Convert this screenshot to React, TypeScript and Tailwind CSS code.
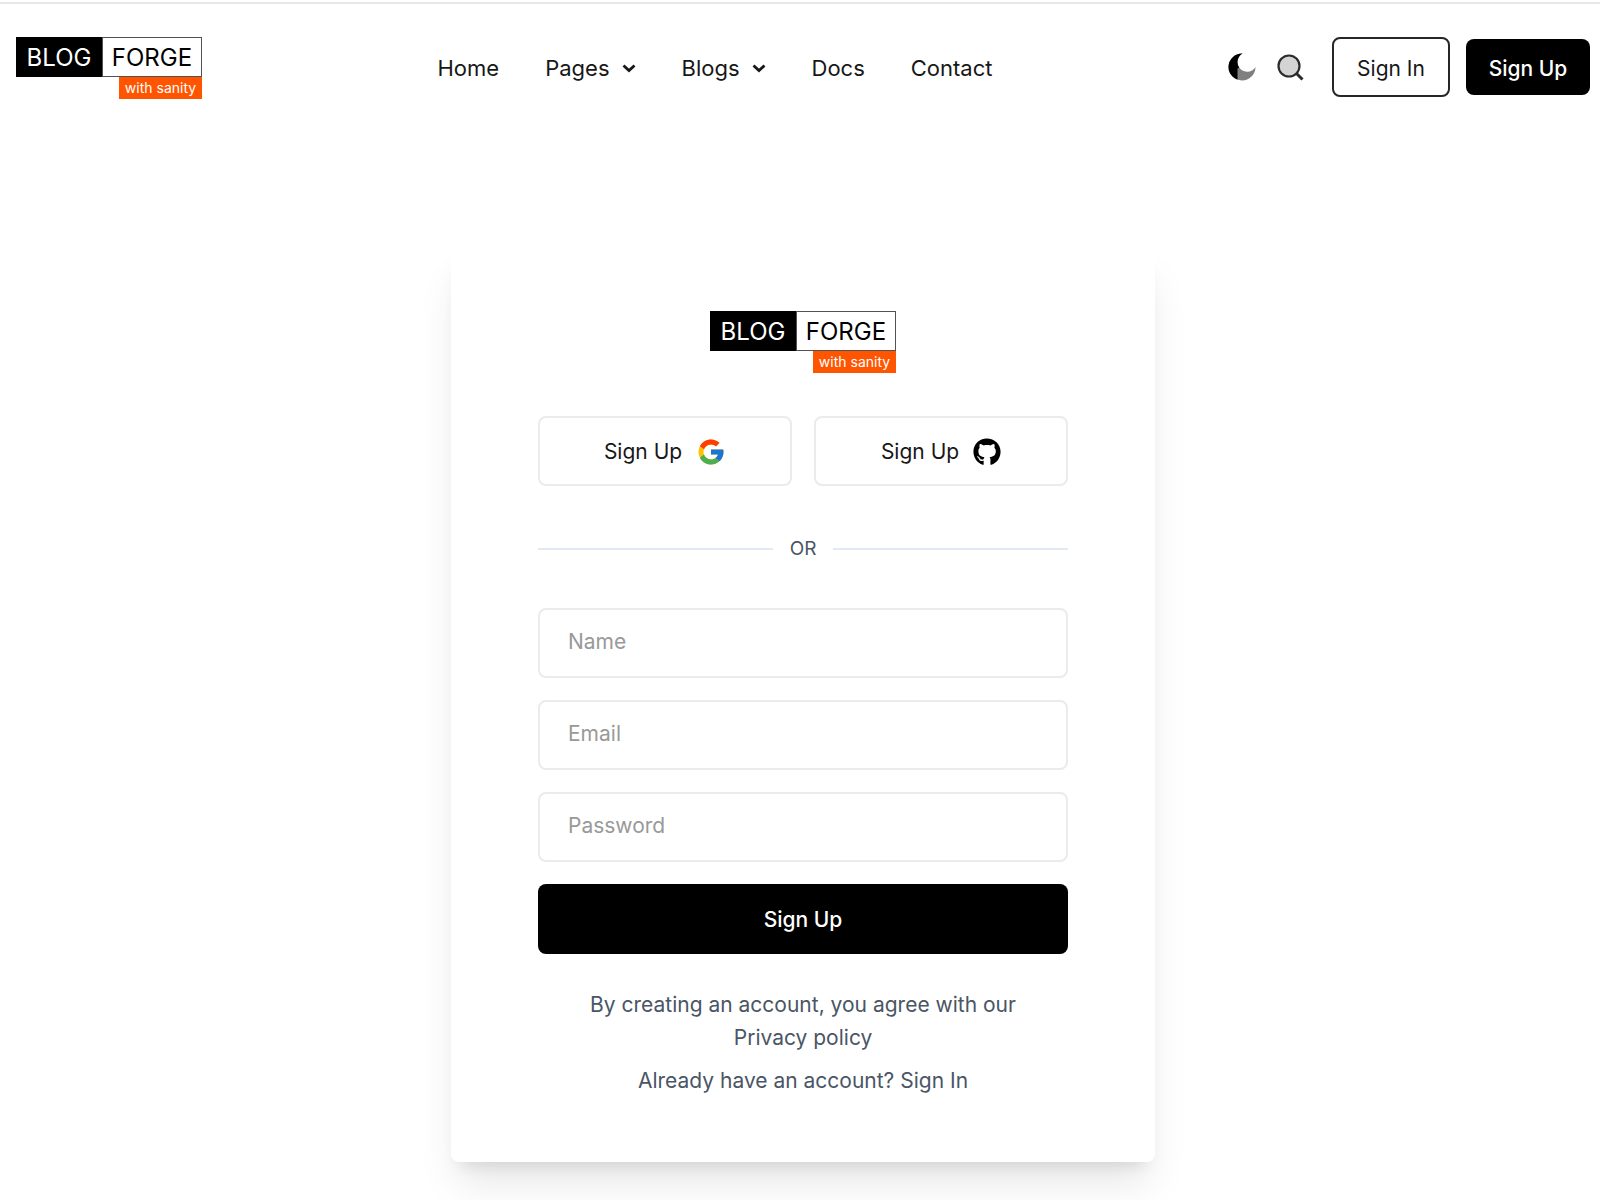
import React from 'react';
import { FcGoogle } from 'react-icons/fc';
import { FaGithub } from 'react-icons/fa';

interface NavItem {
  label: string;
  hasMenu?: boolean;
}

const navItems: NavItem[] = [
  { label: 'Home' },
  { label: 'Pages', hasMenu: true },
  { label: 'Blogs', hasMenu: true },
  { label: 'Docs' },
  { label: 'Contact' },
];

const fields = [
  { id: 'name', label: 'Name', type: 'text' },
  { id: 'email', label: 'Email', type: 'email' },
  { id: 'password', label: 'Password', type: 'password' },
];

const Logo: React.FC = () => (
  <a href="#" className="flex w-[186px] flex-col items-end text-black">
    <span className="flex h-10 w-full text-2xl">
      <span className="flex flex-1 items-center justify-center bg-black pt-[2px] text-white">BLOG</span>
      <span className="flex w-[100px] items-center justify-center border border-neutral-600 bg-white pt-[2px]">
        FORGE
      </span>
    </span>
    <span className="flex h-[22px] w-[83px] items-center justify-center bg-[#ff5500] text-sm text-white">
      with sanity
    </span>
  </a>
);

const ChevronIcon: React.FC = () => (
  <svg viewBox="0 0 14 9" className="h-[9px] w-[14px]" fill="none" stroke="currentColor" strokeWidth="2.8">
    <path d="M1.500 1.500 7 6.500l5.500-5" />
  </svg>
);

const MoonIcon: React.FC = () => (
  <svg viewBox="0 0 28 28" className="size-7">
    <clipPath id="moon-dark">
      <path d="M0 0H20L13 13.500 9.500 15.500V28H0Z" />
    </clipPath>
    <path d="M14.500 .5A13.500 13.500 0 1 0 27.500 14A9.700 9.700 0 1 1 14.500 .5Z" fill="#808080" />
    <path d="M14.500 .5A13.500 13.500 0 1 0 27.500 14A9.700 9.700 0 1 1 14.500 .5Z" fill="#000" clipPath="url(#moon-dark)" />
  </svg>
);

const SearchIcon: React.FC = () => (
  <svg viewBox="0 0 28 28" className="size-7" stroke="#2b2b2b" strokeWidth="2.2">
    <circle cx="13" cy="13" r="10.500" fill="#d4d4d4" />
    <path d="m20.500 20.500 6 6" fill="none" strokeWidth="3" />
  </svg>
);

const Header: React.FC = () => (
  <header className="flex items-center justify-between border-t-2 border-[#e8e8e8] pt-[33px] pr-[10px] pl-4">
    <Logo />

    <nav className="flex items-center gap-[46px]">
      {navItems.map((item) => (
        <a key={item.label} href="#" className="flex items-center gap-3">
          {item.label}
          {item.hasMenu && <ChevronIcon />}
        </a>
      ))}
    </nav>

    <div className="flex items-center pb-[2px] text-[21px]">
      <button type="button" aria-label="Toggle theme" className="mr-5">
        <MoonIcon />
      </button>
      <button type="button" aria-label="Search" className="mr-7">
        <SearchIcon />
      </button>
      <a href="#" className="mr-4 flex h-[60px] w-[118px] items-center justify-center rounded-lg border-2 border-neutral-800 pt-1">
        Sign In
      </a>
      <a href="#" className="flex h-14 w-[124px] items-center justify-center rounded-lg bg-black pt-1 font-medium text-white">
        Sign Up
      </a>
    </div>
  </header>
);

export default function App() {
  return (
    <div className="min-h-screen bg-white pt-[2px] pb-9 font-['Inter',sans-serif] text-[22px] leading-8 text-neutral-900">
      <Header />

      <main className="mt-[148px] pr-[14px] pl-5 text-[21px]">
        <div className="mx-auto w-full max-w-[704px] rounded-lg bg-white px-[87px] pt-16 pb-[65px] shadow-[0_27px_40px_-7px_rgba(0,0,0,0.1),0_12px_15px_-9px_rgba(0,0,0,0.1)]">
          <div className="flex justify-center">
            <Logo />
          </div>

          <div className="mt-[43px] flex gap-[22px]">
            <button type="button" className="flex h-[70px] flex-1 items-center justify-center gap-[14px] rounded-lg border-2 border-[#ebebeb] pt-[2px]">
              Sign Up
              <FcGoogle className="size-[30px]" />
            </button>
            <button type="button" className="flex h-[70px] flex-1 items-center justify-center gap-[14px] rounded-lg border-2 border-[#ebebeb] pt-[2px]">
              Sign Up
              <FaGithub className="size-7 text-black" />
            </button>
          </div>

          <div className="mt-[47px] flex items-center gap-[17px] text-[19px] leading-8 text-gray-600">
            <span className="h-[2px] flex-1 bg-[#e2e8f4]" />
            OR
            <span className="h-[2px] flex-1 bg-[#e2e8f4]" />
          </div>

          <form className="mt-[43px] flex flex-col gap-[22px]">
            {fields.map((field) => (
              <input
                key={field.id}
                id={field.id}
                type={field.type}
                aria-label={field.label}
                placeholder={field.label}
                className="h-[70px] w-full rounded-lg border-2 border-[#ebebeb] px-7 pb-1 placeholder:text-[#999]"
              />
            ))}
            <button type="submit" className="h-[70px] rounded-lg bg-black pt-[2px] font-medium text-white">
              Sign Up
            </button>
          </form>

          <div className="mt-[34px] text-center leading-[33px] text-gray-600">
            <p>
              By creating an account, you agree with our{' '}
              <a href="#" className="inline-block whitespace-nowrap">Privacy policy</a>
            </p>
            <p className="mt-[10px]">
              Already have an account? <a href="#">Sign In</a>
            </p>
          </div>
        </div>
      </main>
    </div>
  );
}
